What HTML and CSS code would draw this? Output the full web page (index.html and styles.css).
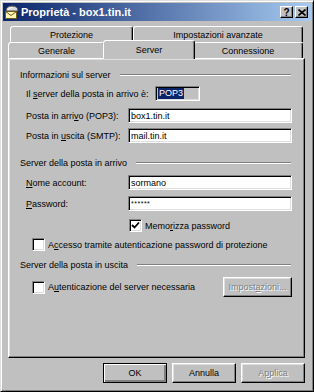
FILE: index.html
```html
<!DOCTYPE html>
<html lang="it">
<head>
    <meta charset="UTF-8">
    <title>Proprietà - box1.tin.it</title>
    <link rel="stylesheet" href="styles.css">
</head>
<body>
    <div class="window">
        <div class="titlebar">
            <svg class="app-icon" width="15" height="14" viewBox="0 0 15 14">
                <path d="M2 6 Q2 1 8 1 Q14 1 14 6 Z" fill="#d8d8d8" stroke="#505050" stroke-width="1"/>
                <path d="M4 5 Q5 2.5 8 2.5" fill="none" stroke="#fff" stroke-width="1"/>
                <rect x="1.5" y="6.5" width="11" height="7" fill="#fff6b0" stroke="#6b5a20" stroke-width="1"/>
                <path d="M1.5 6.5 L7 10.5 L12.5 6.5" fill="none" stroke="#6b5a20" stroke-width="1"/>
            </svg>
            <span class="title">Proprietà - box1.tin.it</span>
            <div class="caption-buttons">
                <span class="caption-btn">?</span>
                <span class="caption-btn">
                    <svg width="8" height="7" viewBox="0 0 8 7">
                        <path d="M0.5 0.5 L7.5 6.5 M7.5 0.5 L0.5 6.5" stroke="#000" stroke-width="1.6"/>
                    </svg>
                </span>
            </div>
        </div>

        <div class="tabs">
            <div class="tab-row back">
                <div class="tab tab-protezione">Protezione</div>
                <div class="tab tab-avanzate">Impostazioni avanzate</div>
            </div>
            <div class="tab-row front">
                <div class="tab tab-generale">Generale</div>
                <div class="tab tab-server selected">Server</div>
                <div class="tab tab-connessione">Connessione</div>
            </div>
        </div>

        <div class="panel">
            <div class="section-title"><span>Informazioni sul server</span><i class="etch"></i></div>

            <div class="field-row row-type">
                <label>Il <u>s</u>erver della posta in arrivo è:</label>
                <div class="field readonly"><span class="selection">POP3</span></div>
            </div>
            <div class="field-row row-pop">
                <label>Posta in arri<u>v</u>o (POP3):</label>
                <div class="field">box1.tin.it</div>
            </div>
            <div class="field-row row-smtp">
                <label>Posta in <u>u</u>scita (SMTP):</label>
                <div class="field">mail.tin.it</div>
            </div>

            <div class="section-title second"><span>Server della posta in arrivo</span><i class="etch"></i></div>

            <div class="field-row row-account">
                <label><u>N</u>ome account:</label>
                <div class="field">sormano</div>
            </div>
            <div class="field-row row-password">
                <label><u>P</u>assword:</label>
                <div class="field password">******</div>
            </div>

            <div class="check-row row-remember">
                <span class="checkbox">
                    <svg width="9" height="9" viewBox="0 0 9 9">
                        <path d="M1 4 L3.5 6.5 L8 1.5" fill="none" stroke="#000" stroke-width="1.8"/>
                    </svg>
                </span>
                <span>Memo<u>r</u>izza password</span>
            </div>
            <div class="check-row row-spa">
                <span class="checkbox"></span>
                <span>A<u>c</u>cesso tramite autenticazione password di protezione</span>
            </div>

            <div class="section-title third"><span>Server della posta in uscita</span><i class="etch"></i></div>

            <div class="check-row row-auth">
                <span class="checkbox"></span>
                <span>A<u>u</u>tenticazione del server necessaria</span>
                <button class="btn btn-settings" disabled>Impost<u>a</u>zioni...</button>
            </div>
        </div>

        <div class="dialog-buttons">
            <button class="btn default">OK</button>
            <button class="btn">Annulla</button>
            <button class="btn" disabled>A<u>p</u>plica</button>
        </div>
    </div>
</body>
</html>
```

FILE: styles.css
```css
* {
    box-sizing: border-box;
}

body {
    margin: 0;
    background: #c0c0c0;
    font-family: "Liberation Sans", Arial, sans-serif;
    font-size: 9px;
    color: #000;
}

.window {
    width: 314px;
    height: 392px;
    padding: 2px;
    background: #c0c0c0;
    border: 1px solid;
    border-color: #dfdfdf #000 #000 #dfdfdf;
    box-shadow: inset 1px 1px #fff, inset -1px -1px #808080;
    display: flex;
    flex-direction: column;
}

/* title bar */
.titlebar {
    height: 18px;
    display: flex;
    align-items: center;
    padding: 0 3px 0 1px;
    background: linear-gradient(to right, #0a246a, #a6caf0);
    color: #fff;
}

.app-icon {
    flex: none;
}

.title {
    margin-left: 2px;
    font-size: 11px;
    font-weight: bold;
}

.caption-buttons {
    margin-left: auto;
    display: flex;
    gap: 2px;
}

.caption-btn {
    width: 13px;
    height: 12px;
    display: flex;
    align-items: center;
    justify-content: center;
    background: #c0c0c0;
    color: #000;
    font-weight: bold;
    font-size: 10px;
    border: 1px solid;
    border-color: #fff #000 #000 #fff;
    box-shadow: inset -1px -1px #808080;
}

/* tabs */
.tabs {
    margin: 5px 6px 0 5px;
}

.tab-row {
    display: flex;
    height: 16px;
    align-items: flex-end;
}

.tab-row.back {
    padding-left: 2px;
}

.tab {
    height: 16px;
    display: flex;
    align-items: center;
    justify-content: center;
    padding-top: 1px;
    background: #c0c0c0;
    border: 1px solid;
    border-bottom: none;
    border-color: #fff #000 transparent #fff;
    border-radius: 3px 3px 0 0;
    box-shadow: inset -1px 0 #808080;
}

.tab-protezione { width: 123px; }
.tab-avanzate { width: 170px; }
.tab-generale { width: 97px; }
.tab-connessione { width: 110px; }

.tab-server {
    width: 92px;
    height: 19px;
    margin: 0 -2px -1px;
    padding-bottom: 2px;
    position: relative;
    z-index: 1;
}

/* panel */
.panel {
    height: 300px;
    padding: 10px 0 0 11px;
    border: 1px solid;
    border-color: #fff #000 #000 #fff;
    box-shadow: inset -1px -1px #808080, inset 1px 1px #dfdfdf;
    margin: 0 6px 0 5px;
    display: flex;
    flex-direction: column;
}

.section-title {
    height: 12px;
    display: flex;
    align-items: center;
    padding-right: 13px;
}

.section-title .etch {
    flex: 1;
    height: 2px;
    margin-left: 9px;
    border-top: 1px solid #808080;
    border-bottom: 1px solid #fff;
}

.section-title.second { margin-top: 14px; }
.section-title.third { margin-top: 8px; }

.field-row {
    display: flex;
    align-items: center;
    margin-left: 6px;
    height: 15px;
}

.field-row label {
    width: 102px;
}

.row-type { margin-top: 5px; }
.row-pop { margin-top: 7px; }
.row-smtp { margin-top: 5px; }
.row-account { margin-top: 6px; }
.row-password { margin-top: 6px; }

.row-type label {
    width: 129px;
}

.field {
    width: 164px;
    height: 15px;
    padding-left: 2px;
    display: flex;
    align-items: center;
    background: #fff;
    border: 1px solid;
    border-color: #808080 #fff #fff #808080;
    box-shadow: inset 1px 1px #000, inset -1px -1px #dfdfdf;
}

.field.readonly {
    width: 45px;
    background: #c0c0c0;
}

.field.password {
    font-size: 7px;
    letter-spacing: 0.5px;
}

.selection {
    background: #0a246a;
    color: #fff;
    line-height: 11px;
    padding: 0 1px;
}

/* checkboxes */
.check-row {
    display: flex;
    align-items: center;
    gap: 2px;
}

.checkbox {
    width: 13px;
    height: 13px;
    margin-right: 1px;
    display: flex;
    align-items: center;
    justify-content: center;
    background: #fff;
    border: 1px solid;
    border-color: #808080 #fff #fff #808080;
    box-shadow: inset 1px 1px #000, inset -1px -1px #dfdfdf;
}

.row-remember {
    margin: 8px 0 0 109px;
    height: 13px;
}

.row-spa {
    margin: 6px 0 0 12px;
    height: 13px;
}

.row-auth {
    margin: 6px 0 0 12px;
    width: 260px;
    height: 20px;
}

/* buttons */
.btn {
    width: 64px;
    height: 20px;
    padding: 0;
    font-family: inherit;
    font-size: 9px;
    color: #000;
    background: #c0c0c0;
    border: 1px solid;
    border-color: #fff #000 #000 #fff;
    box-shadow: inset -1px -1px #808080, inset 1px 1px #dfdfdf;
}

.btn.default {
    outline: 1px solid #000;
    outline-offset: -1px;
    border-color: #000;
    box-shadow: inset 1px 1px #fff, inset -2px -2px #808080;
}

.btn:disabled {
    color: #808080;
    text-shadow: 1px 1px #fff;
}

.btn-settings {
    width: 69px;
    margin-left: auto;
}

.dialog-buttons {
    display: flex;
    justify-content: flex-end;
    gap: 5px;
    margin: 5px 6px 0 0;
}
```
